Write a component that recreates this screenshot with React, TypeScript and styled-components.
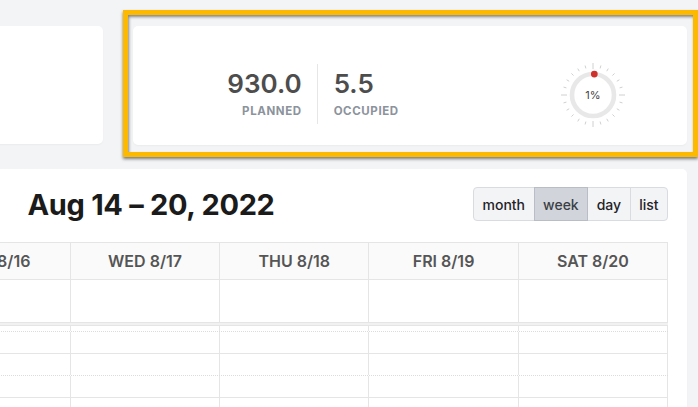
import React from 'react';
import styled, { createGlobalStyle, css } from 'styled-components';

const GlobalStyle = createGlobalStyle`
  html, body { margin: 0; padding: 0; background: #f3f4f6; overflow: hidden; }
  body { font-family: Inter, "Noto Sans", sans-serif; -webkit-font-smoothing: antialiased; }
  * { box-sizing: border-box; }
`;

const OFFSET = 460;

const Page = styled.div`
  width: ${698 + OFFSET}px;
  margin-left: -${OFFSET}px;
  padding: 26px 11px 0 0;
  display: flex;
  flex-direction: column;
  gap: 24px;
`;

const TopRow = styled.div`
  display: grid;
  grid-template-columns: 1fr 554px;
  gap: 30px;
  align-items: start;
`;

const Card = styled.div`
  background: #fff;
  border-radius: 5px;
  box-shadow: 0 1px 2px rgba(0, 0, 0, 0.04);
`;

const SummaryCard = styled(Card)`
  height: 118px;
`;

const StatsCard = styled(Card)`
  position: relative;
  height: 119px;
  display: grid;
  grid-template-columns: repeat(3, 1fr);
  align-items: center;
  padding-top: 17px;
`;

const Stat = styled.div<{ $side: 'left' | 'right' }>`
  height: 60px;
  display: flex;
  flex-direction: column;
  justify-content: center;
  ${(p) =>
    p.$side === 'right'
      ? css`
          justify-self: end;
          align-items: flex-end;
          padding-right: 15px;
          border-right: 1px solid #e6e6e6;
        `
      : css`
          justify-self: start;
          align-items: flex-start;
          padding-left: 16px;
        `}
`;

const StatValue = styled.div`
  font-size: 26px;
  line-height: 1;
  font-weight: 600;
  color: #4d4d4d;
`;

const StatLabel = styled.div`
  margin-top: 9px;
  font-size: 11.5px;
  line-height: 1;
  font-weight: 700;
  letter-spacing: 0.6px;
  color: #8b939c;
`;

const GaugeWrap = styled.div`
  justify-self: center;
  margin: 2px 3px 0 0;
  display: flex;
`;

const Highlight = styled.div`
  position: absolute;
  left: -10px;
  top: -16px;
  right: -11px;
  bottom: -12px;
  border: 5px solid #fcb900;
  box-shadow: 0 2px 3px rgba(0, 0, 0, 0.5), inset 1px 2px 3px rgba(0, 0, 0, 0.45);
  pointer-events: none;
`;

const CalendarCard = styled(Card)`
  padding: 18px 19px 0;
  min-height: 300px;
  border-radius: 5px 5px 0 0;
`;

const Toolbar = styled.div`
  display: flex;
  justify-content: space-between;
  align-items: center;
  height: 34px;
`;

const ToolbarChunk = styled.div<{ $width?: number }>`
  display: flex;
  gap: 8px;
  ${(p) => p.$width && css`width: ${p.$width}px;`}
`;

const Title = styled.h2`
  margin: 0;
  font-size: 29px;
  font-weight: 700;
  letter-spacing: -0.3px;
  color: #1b1b1b;
  line-height: 1;
`;

const ButtonGroup = styled.div`
  display: flex;
`;

const ViewButton = styled.button<{ $active?: boolean }>`
  height: 34px;
  padding: 0 8.5px;
  margin: 0;
  font-family: inherit;
  font-size: 14px;
  font-weight: 500;
  color: #1f2328;
  background: #f3f4f6;
  border: 1px solid #d8dbe0;
  border-radius: 0;
  & + & {
    margin-left: -1px;
  }
  &:first-child {
    border-radius: 4px 0 0 4px;
  }
  &:last-child {
    border-radius: 0 4px 4px 0;
  }
  ${(p) =>
    p.$active &&
    css`
      position: relative;
      background: #d1d5db;
      border-color: #b9bec6;
      color: #3b3f45;
    `}
`;

const Table = styled.div`
  margin-top: 21px;
  border-top: 1px solid #e5e5e5;
  border-left: 1px solid #e5e5e5;
`;

const GRID = '63px repeat(7, minmax(0, 1fr))';

const HeaderRow = styled.div`
  display: grid;
  grid-template-columns: ${GRID};
  height: 37px;
  background: #fafafa;
  border-bottom: 1px solid #e5e5e5;
`;

const HeaderCell = styled.div`
  display: flex;
  align-items: center;
  justify-content: center;
  border-right: 1px solid #e5e5e5;
  font-size: 16px;
  font-weight: 600;
  color: #555;
`;

const AllDayRow = styled.div`
  display: grid;
  grid-template-columns: ${GRID};
  height: 42px;
`;

const Cell = styled.div`
  border-right: 1px solid #e5e5e5;
  font-size: 12px;
  color: #666;
  display: flex;
  align-items: flex-start;
  justify-content: flex-end;
  padding: 4px 4px 0 0;
`;

const Divider = styled.div`
  height: 4px;
  background: #f1f1f1;
  border-top: 1px solid #e5e5e5;
  border-bottom: 1px solid #e5e5e5;
`;

const SlotViewport = styled.div`
  height: 200px;
  overflow: hidden;
`;

const SlotScroller = styled.div`
  margin-top: -17px;
`;

const SlotRow = styled.div<{ $minor: boolean }>`
  display: grid;
  grid-template-columns: ${GRID};
  height: 22px;
  border-top: 1px ${(p) => (p.$minor ? 'dotted #dcdcdc' : 'solid #e5e5e5')};
`;

const days = ['SUN 8/14', 'MON 8/15', 'TUE 8/16', 'WED 8/17', 'THU 8/18', 'FRI 8/19', 'SAT 8/20'];
const slots = ['7am', '', '8am', '', '9am', '', '10am', '', '11am', ''];

const Gauge: React.FC<{ percent: number }> = ({ percent }) => {
  const c = 33;
  const ticks = Array.from({ length: 24 }, (_, i) => {
    const a = (i * 15 * Math.PI) / 180;
    const major = i % 6 === 0;
    const r1 = major ? 26 : 27.5;
    const r2 = major ? 32 : 30.5;
    return (
      <line
        key={i}
        x1={c + r1 * Math.sin(a)}
        y1={c - r1 * Math.cos(a)}
        x2={c + r2 * Math.sin(a)}
        y2={c - r2 * Math.cos(a)}
        stroke="#d0d0d0"
        strokeWidth={1}
      />
    );
  });
  const ang = (percent / 100) * 2 * Math.PI;
  return (
    <svg width="66" height="66" viewBox="0 0 66 66">
      {ticks}
      <circle cx={c} cy={c} r={21} fill="none" stroke="#e8e8e8" strokeWidth={4.6} />
      <circle cx={c + 21 * Math.sin(ang)} cy={c - 21 * Math.cos(ang)} r={3.4} fill="#d0302b" />
      <text
        x={c}
        y={c + 3.9}
        textAnchor="middle"
        fontSize="11"
        fontFamily="Inter, sans-serif"
        fill="#444"
      >
        {percent}%
      </text>
    </svg>
  );
};

export default function App() {
  return (
    <>
      <GlobalStyle />
      <Page>
        <TopRow>
          <SummaryCard />
          <StatsCard>
            <Stat $side="right">
              <StatValue>930.0</StatValue>
              <StatLabel>PLANNED</StatLabel>
            </Stat>
            <Stat $side="left">
              <StatValue>5.5</StatValue>
              <StatLabel>OCCUPIED</StatLabel>
            </Stat>
            <GaugeWrap>
              <Gauge percent={1} />
            </GaugeWrap>
            <Highlight />
          </StatsCard>
        </TopRow>
        <CalendarCard>
          <Toolbar>
            <ToolbarChunk $width={270}>
              <ButtonGroup>
                <ViewButton aria-label="prev">‹</ViewButton>
                <ViewButton aria-label="next">›</ViewButton>
              </ButtonGroup>
              <ViewButton>today</ViewButton>
            </ToolbarChunk>
            <Title>Aug 14 – 20, 2022</Title>
            <ButtonGroup>
              <ViewButton>month</ViewButton>
              <ViewButton $active>week</ViewButton>
              <ViewButton>day</ViewButton>
              <ViewButton>list</ViewButton>
            </ButtonGroup>
          </Toolbar>
          <Table>
            <HeaderRow>
              <HeaderCell />
              {days.map((d) => (
                <HeaderCell key={d}>{d}</HeaderCell>
              ))}
            </HeaderRow>
            <AllDayRow>
              <Cell>all-day</Cell>
              {days.map((d) => (
                <Cell key={d} />
              ))}
            </AllDayRow>
            <Divider />
            <SlotViewport>
              <SlotScroller>
                {slots.map((s, i) => (
                  <SlotRow key={i} $minor={i % 2 === 1}>
                    <Cell>{s}</Cell>
                    {days.map((d) => (
                      <Cell key={d} />
                    ))}
                  </SlotRow>
                ))}
              </SlotScroller>
            </SlotViewport>
          </Table>
        </CalendarCard>
      </Page>
    </>
  );
}
